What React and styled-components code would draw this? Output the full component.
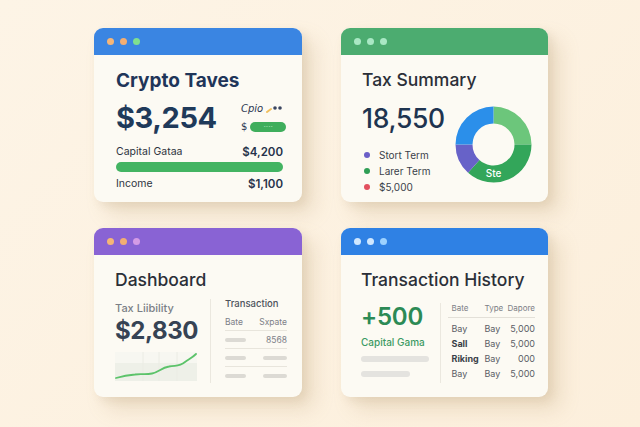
import React from "react";
import styled, { createGlobalStyle } from "styled-components";

const GlobalStyle = createGlobalStyle`
  html, body { margin: 0; padding: 0; }
  body {
    background: #fdf3e3;
    font-family: "Inter", "Open Sans", "Liberation Sans", sans-serif;
    -webkit-font-smoothing: antialiased;
  }
`;

const Board = styled.div`
  width: 640px;
  height: 427px;
  box-sizing: border-box;
  padding: 28px 0 0 94px;
  display: grid;
  grid-template-columns: 208px 207px;
  grid-template-rows: 174px 169px;
  column-gap: 39px;
  row-gap: 26px;
  background: linear-gradient(135deg, #fdf4e6 0%, #fcefdc 100%);
`;

const Card = styled.div`
  background: #fcfaf3;
  border-radius: 9px;
  overflow: hidden;
  display: flex;
  flex-direction: column;
  box-shadow: 12px 12px 20px rgba(176, 146, 96, 0.22),
    4px 4px 8px rgba(150, 120, 80, 0.12);
`;

const TitleBar = styled.div`
  height: 27px;
  flex: none;
  background: ${(p) => p.$color};
  display: flex;
  align-items: center;
  gap: 6px;
  padding-left: 13px;
`;

const Dot = styled.span`
  width: 7px;
  height: 7px;
  border-radius: 50%;
  background: ${(p) => p.$color};
`;

const Body = styled.div`
  flex: 1;
  padding: ${(p) => p.$pad || "14px 19px 0 21px"};
  display: flex;
  flex-direction: column;
`;

const Title = styled.div`
  font-size: ${(p) => p.$size || 17.5}px;
  line-height: 22px;
  font-weight: ${(p) => p.$weight || 500};
  color: ${(p) => p.$color || "#2b2f38"};
  white-space: nowrap;
`;

/* ---------- Crypto Taxes card ---------- */

const AmountRow = styled.div`
  display: flex;
  justify-content: space-between;
  align-items: flex-start;
  margin-top: 9px;
`;

const BigAmount = styled.div`
  font-size: ${(p) => p.$size || 29}px;
  line-height: ${(p) => (p.$size || 29) + 4}px;
  font-weight: ${(p) => p.$weight || 700};
  color: ${(p) => p.$color || "#1f3a5a"};
  letter-spacing: ${(p) => p.$track || "-0.4px"};
  margin-top: ${(p) => p.$mt || 0}px;
`;

const MiniWidget = styled.div`
  display: flex;
  flex-direction: column;
  gap: 7px;
  margin: 2px -3px 0 0;
  width: 45px;
`;

const MiniLine = styled.div`
  display: flex;
  align-items: center;
  gap: 3px;
  font-family: "DejaVu Sans", sans-serif;
  font-size: 10px;
  color: #2a3550;
`;

const Pill = styled.div`
  flex: 1;
  height: 10px;
  border-radius: 5px;
  background: #3fae5c;
  display: flex;
  align-items: center;
  justify-content: center;
  font-size: 4px;
  color: #8fd7a2;
`;

const StatRow = styled.div`
  display: flex;
  justify-content: space-between;
  align-items: center;
  font-size: 10.5px;
  line-height: 14px;
  color: #2d3340;
  margin-top: ${(p) => p.$mt || 0}px;
`;

const StatValue = styled.span`
  font-weight: 600;
  font-size: 11.5px;
  color: #26324a;
`;

const Bar = styled.div`
  height: 10px;
  border-radius: 5px;
  background: #43b462;
  margin-top: ${(p) => p.$mt || 0}px;
`;

/* ---------- Tax Summary card ---------- */

const SplitRow = styled.div`
  display: flex;
  justify-content: space-between;
  align-items: flex-start;
  margin-top: ${(p) => p.$mt || 0}px;
`;

const Legend = styled.div`
  display: flex;
  flex-direction: column;
  gap: 2px;
  margin-top: 14px;
  margin-left: 2px;
`;

const LegendItem = styled.div`
  display: flex;
  align-items: center;
  gap: 9px;
  font-size: 10px;
  line-height: 14px;
  color: #3a3f4a;
`;

const LegendDot = styled.span`
  width: 6px;
  height: 6px;
  border-radius: 50%;
  background: ${(p) => p.$color};
`;

const DonutBox = styled.div`
  position: relative;
  width: 77px;
  height: 77px;
  margin-top: 3px;
`;

const DonutLabel = styled.span`
  position: absolute;
  left: 0;
  right: 0;
  bottom: 4px;
  text-align: center;
  font-size: 10px;
  font-weight: 500;
  color: #ffffff;
`;

/* ---------- Dashboard card ---------- */

const Columns = styled.div`
  display: flex;
  margin-top: ${(p) => p.$mt || 0}px;
  flex: 1;
`;

const LeftCol = styled.div`
  width: ${(p) => p.$w}px;
  display: flex;
  flex-direction: column;
`;

const Divider = styled.div`
  width: 1px;
  background: #ebe8df;
  margin: ${(p) => p.$m || "0 14px 14px 13px"};
`;

const RightCol = styled.div`
  flex: 1;
  display: flex;
  flex-direction: column;
  margin-top: -2px;
`;

const Label = styled.div`
  font-size: ${(p) => p.$size || 11}px;
  line-height: 14px;
  font-weight: 500;
  color: ${(p) => p.$color || "#7b7f86"};
  margin-top: ${(p) => p.$mt || 0}px;
`;

const MiniTableRow = styled.div`
  display: flex;
  justify-content: space-between;
  align-items: center;
  height: 18px;
  border-bottom: ${(p) => (p.$last ? "none" : "1px solid #e8e5dc")};
  font-size: 8.5px;
  color: #7d8088;
  box-sizing: border-box;
`;

const Stub = styled.span`
  width: ${(p) => p.$w}px;
  height: 4px;
  border-radius: 2px;
  background: #dcdad4;
`;

const ChartWrap = styled.div`
  margin-top: ${(p) => p.$mt || 0}px;
  line-height: 0;
`;

/* ---------- Transaction History card ---------- */

const Placeholder = styled.div`
  width: ${(p) => p.$w}px;
  height: 6px;
  border-radius: 3px;
  background: #e4e3df;
  margin-top: ${(p) => p.$mt || 0}px;
`;

const Table = styled.div`
  flex: 1;
  display: grid;
  grid-template-columns: 33px 26px 1fr;
  grid-template-rows: 20px repeat(4, 15px);
  align-items: center;
  margin-top: -2px;
`;

const Th = styled.div`
  font-size: 8px;
  color: #7c7f86;
  text-align: ${(p) => (p.$right ? "right" : "left")};
  border-bottom: 1px solid #e3e0d8;
  height: 16px;
  line-height: 15px;
  align-self: start;
  padding-left: ${(p) => (p.$right ? 0 : 3)}px;
`;

const Td = styled.div`
  font-size: 9px;
  color: ${(p) => (p.$strong ? "#3a3f48" : "#5a5e66")};
  font-weight: ${(p) => (p.$strong ? 700 : 400)};
  text-align: ${(p) => (p.$right ? "right" : "left")};
  padding-left: ${(p) => (p.$right ? 0 : 3)}px;
  white-space: nowrap;
`;

/* ---------- drawings ---------- */

const polar = (cx, cy, r, deg) => {
  const a = ((deg - 90) * Math.PI) / 180;
  return [cx + r * Math.cos(a), cy + r * Math.sin(a)];
};

const sector = (start, end, ro, ri, c = 38.5) => {
  const [x1, y1] = polar(c, c, ro, start);
  const [x2, y2] = polar(c, c, ro, end);
  const [x3, y3] = polar(c, c, ri, end);
  const [x4, y4] = polar(c, c, ri, start);
  const large = end - start > 180 ? 1 : 0;
  return `M${x1} ${y1} A${ro} ${ro} 0 ${large} 1 ${x2} ${y2} L${x3} ${y3} A${ri} ${ri} 0 ${large} 0 ${x4} ${y4} Z`;
};

const slices = [
  { from: 0, to: 90, color: "#6cc67b" },
  { from: 90, to: 222, color: "#33a65a" },
  { from: 222, to: 270, color: "#6762c8" },
  { from: 270, to: 360, color: "#2b8fea" },
];

const Donut = () => (
  <DonutBox>
    <svg width="77" height="77" viewBox="0 0 77 77">
      {slices.map((s) => (
        <path key={s.from} d={sector(s.from, s.to, 38, 21)} fill={s.color} />
      ))}
    </svg>
    <DonutLabel>Ste</DonutLabel>
  </DonutBox>
);

const TrendChart = () => (
  <svg width="82" height="29" viewBox="0 0 82 29">
    <rect x="0" y="11" width="82" height="18" fill="#eef0e8" />
    <rect x="0" y="0" width="82" height="11" fill="#f7f7f1" />
    {[28, 44, 62].map((x) => (
      <line key={x} x1={x} y1="0" x2={x} y2="29" stroke="#ebece4" strokeWidth="1" />
    ))}
    <path
      d="M1 26 C8 24 14 23 20 22.5 C27 21.5 30 23 37 21.5 C44 20 46 16 54 14.5 C61 13 64 15 70 10 C74 7 77 6 81 2"
      fill="none"
      stroke="#5cc36a"
      strokeWidth="1.8"
      strokeLinecap="round"
    />
  </svg>
);

const Window = ({ bar, dots, children }) => (
  <Card>
    <TitleBar $color={bar}>
      {dots.map((c, i) => (
        <Dot key={i} $color={c} />
      ))}
    </TitleBar>
    {children}
  </Card>
);

const history = [
  ["Bay", "Bay", "5,000", false],
  ["Sall", "Bay", "5,000", true],
  ["Riking", "Bay", "000", true],
  ["Bay", "Bay", "5,000", false],
];

export default function App() {
  return (
    <>
      <GlobalStyle />
      <Board>
        <Window bar="#3a85e2" dots={["#f5b677", "#f3ae72", "#7fe08f"]}>
          <Body $pad="15px 19px 0 22px">
            <Title $size={19} $weight={700} $color="#1f3559">
              Crypto Taves
            </Title>
            <AmountRow>
              <BigAmount>$3,254</BigAmount>
              <MiniWidget>
                <MiniLine>
                  <span style={{ fontStyle: "italic" }}>Cpio</span>
                  <svg width="16" height="8" viewBox="0 0 16 8">
                    <path d="M1 7 L5 4" stroke="#f0c060" strokeWidth="2" strokeLinecap="round" />
                    <circle cx="9" cy="3" r="1.8" fill="#3a4560" />
                    <circle cx="14" cy="3" r="1.8" fill="#3a4560" />
                  </svg>
                </MiniLine>
                <MiniLine>
                  <span>$</span>
                  <Pill>••••</Pill>
                </MiniLine>
              </MiniWidget>
            </AmountRow>
            <StatRow $mt={11}>
              <span>Capital Gataa</span>
              <StatValue>$4,200</StatValue>
            </StatRow>
            <Bar $mt={3} />
            <StatRow $mt={5}>
              <span>Income</span>
              <StatValue>$1,100</StatValue>
            </StatRow>
          </Body>
        </Window>

        <Window bar="#4cac70" dots={["#a9e8c4", "#a9e8c4", "#a9e8c4"]}>
          <Body $pad="14px 16px 0 21px">
            <Title>Tax Summary</Title>
            <SplitRow $mt={12}>
              <div>
                <BigAmount $size={26.5} $weight={500} $color="#1e3450" $track="-0.3px">
                  18,550
                </BigAmount>
                <Legend>
                  <LegendItem>
                    <LegendDot $color="#6b5fc7" />
                    Stort Term
                  </LegendItem>
                  <LegendItem>
                    <LegendDot $color="#2f9e55" />
                    Larer Term
                  </LegendItem>
                  <LegendItem>
                    <LegendDot $color="#e2505e" />
                    $5,000
                  </LegendItem>
                </Legend>
              </div>
              <Donut />
            </SplitRow>
          </Body>
        </Window>

        <Window bar="#8963d4" dots={["#f5b677", "#f3ae72", "#d49be6"]}>
          <Body $pad="14px 15px 0 21px">
            <Title>Dashboard</Title>
            <Columns $mt={8}>
              <LeftCol $w={82}>
                <Label $mt={2}>Tax Liibility</Label>
                <BigAmount $size={24} $weight={700} $color="#364354" $track="-0.4px" $mt={2}>
                  $2,830
                </BigAmount>
                <ChartWrap $mt={7}>
                  <TrendChart />
                </ChartWrap>
              </LeftCol>
              <Divider />
              <RightCol>
                <Label $size={9.5} $color="#4d525b">Transaction</Label>
                <MiniTableRow style={{ marginTop: 2 }}>
                  <span>Bate</span>
                  <span>Sxpate</span>
                </MiniTableRow>
                <MiniTableRow>
                  <Stub $w={21} />
                  <span>8568</span>
                </MiniTableRow>
                <MiniTableRow>
                  <Stub $w={21} />
                  <Stub $w={24} />
                </MiniTableRow>
                <MiniTableRow $last>
                  <Stub $w={21} />
                  <Stub $w={24} />
                </MiniTableRow>
              </RightCol>
            </Columns>
          </Body>
        </Window>

        <Window bar="#2f81e4" dots={["#cfe7ff", "#cfe7ff", "#9dd2ff"]}>
          <Body $pad="14px 13px 0 20px">
            <Title>Transaction History</Title>
            <Columns $mt={12}>
              <LeftCol $w={70}>
                <BigAmount $size={24} $weight={600} $color="#2c8a55" $track="-0.2px">
                  +500
                </BigAmount>
                <Label $size={10} $color="#3c9a63" $mt={4}>
                  Capital Gama
                </Label>
                <Placeholder $w={68} $mt={7} />
                <Placeholder $w={49} $mt={9} />
              </LeftCol>
              <Divider $m="0 8px 14px 11px" />
              <Table>
                <Th>Bate</Th>
                <Th>Type</Th>
                <Th $right>Dapore</Th>
                {history.map(([a, b, c, strong], i) => (
                  <React.Fragment key={i}>
                    <Td $strong={strong}>{a}</Td>
                    <Td>{b}</Td>
                    <Td $right>{c}</Td>
                  </React.Fragment>
                ))}
              </Table>
            </Columns>
          </Body>
        </Window>
      </Board>
    </>
  );
}
